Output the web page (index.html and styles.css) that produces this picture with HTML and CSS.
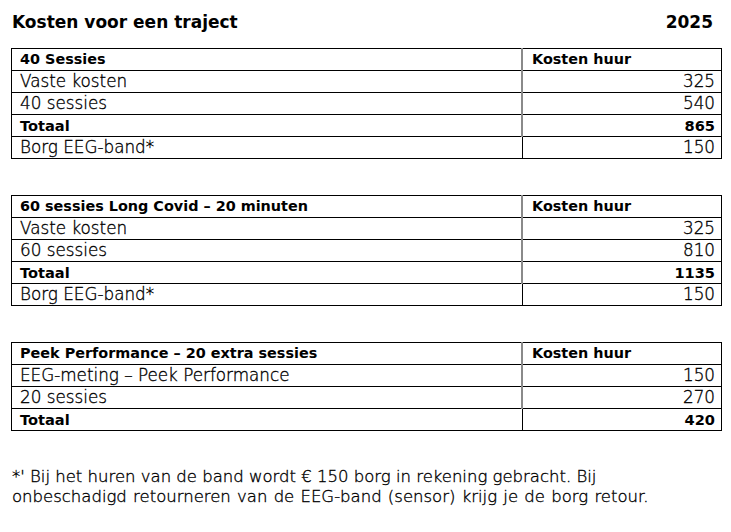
FILE: index.html
```html
<!DOCTYPE html>
<html lang="nl">
<head>
<meta charset="utf-8">
<title>Kosten voor een traject</title>
<link rel="stylesheet" href="styles.css">
</head>
<body>
<div class="page">
  <div class="title-row">
    <h1 class="title">Kosten voor een traject</h1>
    <span class="year">2025</span>
  </div>

  <table class="cost">
    <tr class="head"><th class="label">40 Sessies</th><th class="val">Kosten huur</th></tr>
    <tr><td class="label">Vaste kosten</td><td class="val">325</td></tr>
    <tr><td class="label">40 sessies</td><td class="val">540</td></tr>
    <tr class="total"><td class="label">Totaal</td><td class="val">865</td></tr>
    <tr class="last"><td class="label">Borg EEG-band*</td><td class="val">150</td></tr>
  </table>

  <table class="cost">
    <tr class="head"><th class="label">60 sessies Long Covid – 20 minuten</th><th class="val">Kosten huur</th></tr>
    <tr><td class="label">Vaste kosten</td><td class="val">325</td></tr>
    <tr><td class="label">60 sessies</td><td class="val">810</td></tr>
    <tr class="total"><td class="label">Totaal</td><td class="val">1135</td></tr>
    <tr class="last"><td class="label">Borg EEG-band*</td><td class="val">150</td></tr>
  </table>

  <table class="cost">
    <tr class="head"><th class="label">Peek Performance – 20 extra sessies</th><th class="val">Kosten huur</th></tr>
    <tr><td class="label">EEG-meting – Peek Performance</td><td class="val">150</td></tr>
    <tr><td class="label">20 sessies</td><td class="val">270</td></tr>
    <tr class="total last"><td class="label">Totaal</td><td class="val">420</td></tr>
  </table>

  <p class="note">*' Bij het huren van de band wordt € 150 borg in rekening gebracht. Bij<br><span class="l2">onbeschadigd retourneren van de EEG-band (sensor) krijg je de borg retour.</span></p>
</div>
</body>
</html>
```

FILE: styles.css
```css
html, body {
  margin: 0;
  padding: 0;
  background: #ffffff;
}

body {
  font-family: "DejaVu Sans", "Liberation Sans", sans-serif;
  color: #000;
}

.page {
  padding: 10px 0 0 11px;
  width: 711px;
}

.title-row {
  display: flex;
  justify-content: space-between;
  align-items: center;
  height: 24px;
  padding: 0 9px 0 1px;
  margin-bottom: 14px;
}

.title {
  margin: 0;
  font-size: 17px;
  font-weight: bold;
}

.year {
  font-size: 17px;
  font-weight: bold;
}

.cost {
  width: 711px;
  border-collapse: collapse;
  table-layout: fixed;
  margin: 0 0 36px 0;
  font-size: 16.8px;
  font-weight: 300;
  -webkit-text-stroke: 0.35px #000;
}

.cost th, .cost td {
  border: 1px solid #000;
  height: 21px;
  padding: 0;
  line-height: 21px;
  white-space: nowrap;
}

.cost th {
  font-weight: bold;
  font-size: 14.4px;
  text-align: left;
  -webkit-text-stroke: 0;
}

.cost .label {
  width: 501px;
  padding-left: 8px;
  text-align: left;
}

.cost .val {
  text-align: right;
  padding-right: 6px;
  border-left: 2px solid #8a8a8a;
}

.cost th.val {
  text-align: left;
  padding-left: 9px;
}

.cost tr.last .val {
  border-left: 1px solid #000;
}

.cost tr.total td {
  font-weight: bold;
  font-size: 14.6px;
  -webkit-text-stroke: 0;
}

.note {
  margin: 36px 0 0 1px;
  font-size: 16.5px;
  font-weight: 300;
  line-height: 20px;
  -webkit-text-stroke: 0.35px #000;
}

.note .l2 {
  word-spacing: 1px;
}
```
